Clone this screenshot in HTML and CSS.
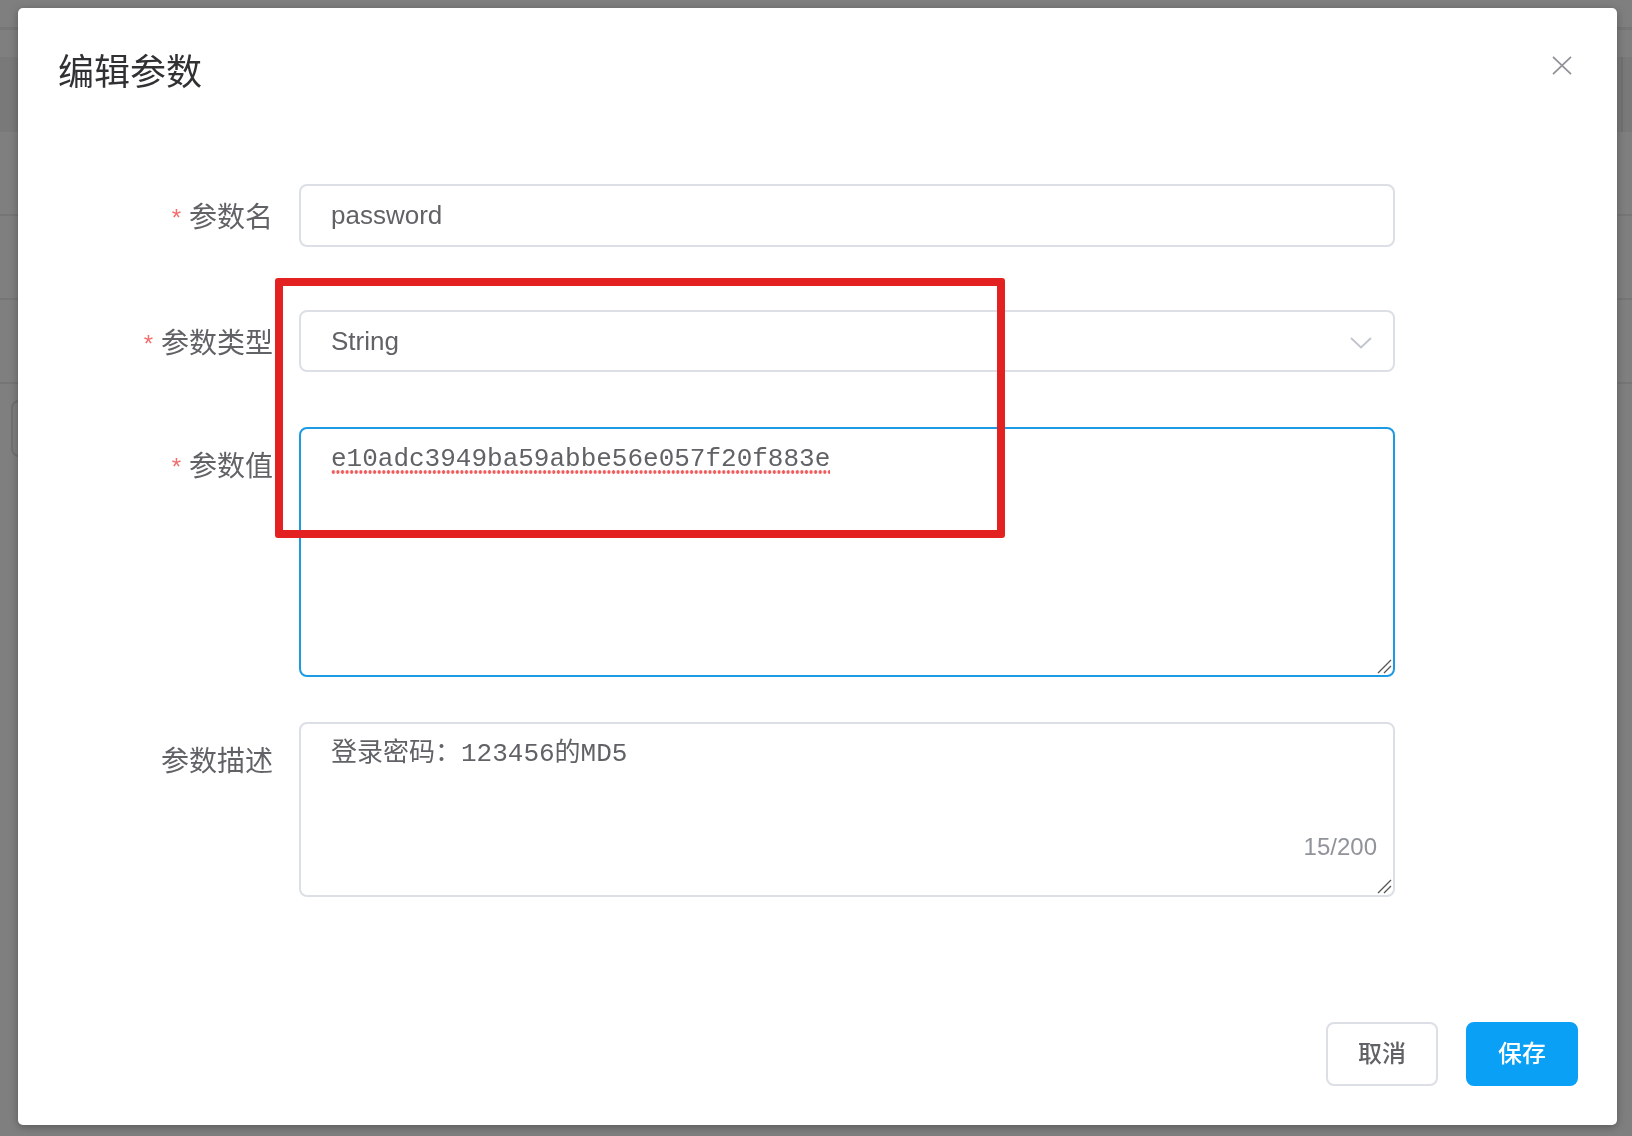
FILE: index.html
```html
<!DOCTYPE html>
<html lang="zh-CN">
<head>
<meta charset="utf-8">
<title>编辑参数</title>
<link rel="stylesheet" href="styles.css">
</head>
<body>
<div class="page">
  <div class="page-top"></div>
  <div class="page-band"><div class="page-band-cell"></div></div>
  <div class="page-row"></div>
  <div class="page-row"></div>
  <div class="page-row"></div>
  <div class="page-search"><div class="page-input"></div></div>
</div>
<div class="mask"></div>
<div class="dialog">
  <div class="dialog-header">
    <h2 class="dialog-title">编辑参数</h2>
    <svg class="dialog-close" viewBox="0 0 20 19" width="20" height="19"><path d="M1 0.8 L19 18.2 M19 0.8 L1 18.2" stroke="#909399" stroke-width="1.8" fill="none"/></svg>
  </div>
  <div class="form">
    <div class="form-item item-name">
      <div class="form-label"><span class="req">*</span>参数名</div>
      <div class="input">password</div>
    </div>
    <div class="form-item item-type">
      <div class="form-label"><span class="req">*</span>参数类型</div>
      <div class="input select"><span>String</span>
        <svg class="chevron" viewBox="0 0 22 12" width="22" height="12"><path d="M1 1 L11 10.5 L21 1" stroke="#c0c4cc" stroke-width="1.8" fill="none"/></svg>
      </div>
    </div>
    <div class="form-item item-value">
      <div class="form-label label-top"><span class="req">*</span>参数值</div>
      <div class="textarea focused"><span class="misspelled">e10adc3949ba59abbe56e057f20f883e</span>
        <svg class="grip" viewBox="0 0 16 16" width="16" height="16"><path d="M2 15 L15 2 M8 15 L15 8" stroke="#555" stroke-width="1.3" fill="none"/></svg>
      </div>
    </div>
    <div class="form-item item-desc">
      <div class="form-label label-top">参数描述</div>
      <div class="textarea desc">登录密码：123456的MD5
        <span class="counter">15/200</span>
        <svg class="grip" viewBox="0 0 16 16" width="16" height="16"><path d="M2 15 L15 2 M8 15 L15 8" stroke="#555" stroke-width="1.3" fill="none"/></svg>
      </div>
    </div>
  </div>
  <div class="dialog-footer">
    <button class="btn btn-default">取消</button>
    <button class="btn btn-primary">保存</button>
  </div>
  <div class="annot"></div>
</div>
</body>
</html>
```

FILE: styles.css
```css
* { box-sizing: border-box; }

body {
  margin: 0;
  width: 1632px;
  height: 1136px;
  overflow: hidden;
  position: relative;
  background: #fff;
  font-family: "Noto Sans CJK SC", sans-serif;
}

/* underlying page */
.page-top { height: 30px; border-bottom: 3px solid #ececec; }
.page-band {
  margin-top: 27px;
  height: 75px;
  background: #f3f3f3;
  display: flex;
  justify-content: flex-end;
}
.page-band-cell { width: 11px; border-left: 2px solid #e2e2e2; }
.page-row { height: 84px; border-bottom: 2px solid #ececec; }
.page-row:first-of-type { height: 82px; }
.page-search { padding: 16px 0 0 11px; }
.page-input { width: 300px; height: 57px; border: 2px solid #e0e0e0; border-radius: 8px; }

.mask {
  position: fixed;
  inset: 0;
  background: rgba(0, 0, 0, 0.5);
}

/* dialog */
.dialog {
  position: absolute;
  left: 18px;
  top: 8px;
  width: 1599px;
  height: 1117px;
  background: #fff;
  border-radius: 5px;
  box-shadow: 0 2px 8px rgba(0, 0, 0, 0.3);
  display: flex;
  flex-direction: column;
}

.dialog-header { position: relative; padding: 43px 40px 0; }
.dialog-title {
  margin: 0;
  font-size: 36px;
  line-height: 36px;
  font-weight: 400;
  color: #303133;
}
.dialog-close { position: absolute; right: 45px; top: 48px; }

.form { margin: 97px 0 0 40px; }
.form-item { display: flex; align-items: flex-start; }
.item-name { margin-bottom: 61px; }
.item-type { margin-bottom: 52px; }
.item-value { margin-bottom: 45px; }

.form-label {
  width: 241px;
  flex: none;
  padding-right: 26px;
  text-align: right;
  font-size: 28px;
  line-height: 63px;
  color: #606266;
  white-space: nowrap;
}
.label-top { padding-top: 6px; }
.req {
  color: #f56c6c;
  font-family: "Liberation Sans", sans-serif;
  font-size: 24px;
  margin-right: 8px;
  vertical-align: 1px;
}

.input {
  width: 1096px;
  height: 63px;
  border: 2px solid #dcdfe6;
  border-radius: 8px;
  padding: 0 30px;
  font-family: "Liberation Sans", "Noto Sans CJK SC", sans-serif;
  font-size: 26px;
  line-height: 59px;
  color: #606266;
}
.select {
  display: flex;
  justify-content: space-between;
  align-items: center;
  padding-right: 21px;
  height: 62px;
}
.chevron { margin-top: 4px; }

.textarea {
  position: relative;
  width: 1096px;
  border: 2px solid #dcdfe6;
  border-radius: 8px;
  padding: 11px 30px;
  font-family: "Liberation Mono", "Noto Sans CJK SC", monospace;
  font-size: 26px;
  line-height: 39px;
  color: #606266;
}
.focused { height: 250px; border-color: #1c9be4; }
.desc { height: 175px; }

.misspelled {
  background-image: radial-gradient(circle at center, #ef5b5b 1.5px, transparent 2px);
  background-size: 4.6px 4px;
  background-repeat: repeat-x;
  background-position: 0 100%;
}

.counter {
  position: absolute;
  right: 16px;
  bottom: 36px;
  font-family: "Liberation Sans", sans-serif;
  font-size: 24px;
  line-height: 24px;
  color: #909399;
}
.grip { position: absolute; right: 1px; bottom: 1px; }

.dialog-footer {
  margin-top: auto;
  display: flex;
  justify-content: flex-end;
  gap: 28px;
  padding: 0 39px 39px 0;
}
.btn {
  width: 112px;
  height: 64px;
  padding: 0 0 6px;
  border-radius: 8px;
  font-family: "Noto Sans CJK SC", sans-serif;
  font-size: 24px;
  font-weight: 500;
  cursor: pointer;
}
.btn-default { background: #fff; border: 2px solid #dcdfe6; color: #606266; }
.btn-primary { background: #0aa0f5; border: 2px solid #0aa0f5; color: #fff; }

.annot {
  position: absolute;
  left: 257px;
  top: 270px;
  width: 730px;
  height: 260px;
  border: 8px solid #e42121;
  border-radius: 3px;
  pointer-events: none;
}
```
